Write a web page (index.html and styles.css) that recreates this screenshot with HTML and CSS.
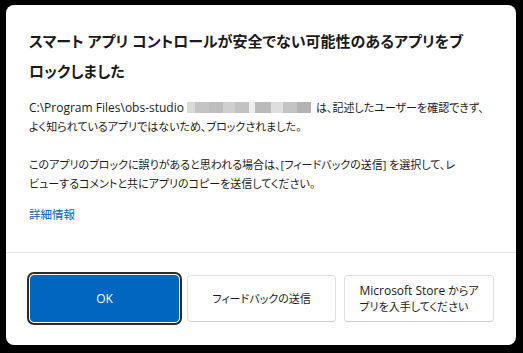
FILE: index.html
```html
<!DOCTYPE html>
<html lang="ja">
<head>
<meta charset="utf-8">
<link rel="stylesheet" href="styles.css">
</head>
<body>
<div class="screen">
  <div class="dialog">
    <div class="content">
      <h1 class="title">スマート アプリ コントロールが安全でない可能性のあるアプリをブ<br>ロックしました</h1>
      <p class="text"><span class="latin">C:\Program Files\obs-studio</span><span class="blur"><i class="b1"></i><i class="b2"></i><i class="b3"></i><i class="b4"></i><i class="b5"></i><i class="gap"></i><i class="b6"></i><i class="b7"></i><i class="b8"></i><i class="b9"></i></span>は、記述したユーザーを確認できず、<br>よく知られているアプリではないため、ブロックされました。</p>
      <p class="text">このアプリのブロックに誤りがあると思われる場合は、[フィードバックの送信] を選択して、レ<br>ビューするコメントと共にアプリのコピーを送信してください。</p>
      <a class="link" href="#">詳細情報</a>
    </div>
    <div class="footer">
      <button class="btn primary"><span class="label latin">OK</span></button>
      <button class="btn"><span class="label">フィードバックの送信</span></button>
      <button class="btn"><span class="label"><span class="latin">Microsoft Store</span> からア<br>プリを入手してください</span></button>
    </div>
  </div>
</div>
</body>
</html>
```
FILE: styles.css
```css
html, body {
  margin: 0;
  padding: 0;
  background: #000;
}
body {
  width: 523px;
  height: 353px;
  overflow: hidden;
  font-family: "Open Sans", "Noto Sans CJK JP", sans-serif;
  font-feature-settings: "palt" 1;
  color: #1b1b1b;
}
.screen {
  padding: 5px 7px 8px 6px;
}
.dialog {
  width: 510px;
  height: 340px;
  background: #fff;
  border-radius: 8px;
  display: flex;
  flex-direction: column;
  overflow: hidden;
}
.content {
  padding: 21px 20px 0 23px;
  flex: 1;
}
.title {
  margin: 0;
  font-size: 15px;
  font-weight: 700;
  line-height: 30px;
  white-space: nowrap;
  color: #1a1a1a;
}
.text {
  margin: 12px 0 19px;
  font-size: 11px;
  line-height: 19px;
  white-space: nowrap;
}
.latin {
  font-size: 12px;
}
.text + .text {
  margin-top: 0;
  margin-bottom: 12px;
}
.blur {
  display: inline-flex;
  vertical-align: -1px;
  height: 11px;
  margin: 0 5px 0 3px;
}
.blur i {
  display: block;
  width: 10px;
  height: 11px;
  background: #c8c8c8;
}
.blur .b1 { background: #d9d9d9; width: 8px; }
.blur .b2 { background: #c4c4c4; width: 14px; }
.blur .b3 { background: #bdbdbd; width: 14px; }
.blur .b4 { background: #cfcfcf; width: 12px; }
.blur .b5 { background: #c2c2c2; width: 14px; }
.blur .gap { background: #ededed; width: 6px; }
.blur .b6 { background: #bababa; width: 16px; }
.blur .b7 { background: #dedede; width: 12px; }
.blur .b8 { background: #c4c4c4; width: 14px; }
.blur .b9 { background: #b3b3b3; width: 14px; }
.link {
  display: block;
  margin-top: 2px;
  font-size: 11.5px;
  line-height: 19px;
  color: #005fb8;
  text-decoration: none;
}
.footer {
  border-top: 1px solid #e5e5e5;
  height: 93px;
  flex: none;
  box-sizing: border-box;
  padding: 22px 22px 0 24px;
  display: grid;
  grid-template-columns: 149px 149px 150px;
  column-gap: 8px;
  align-items: start;
}
.btn {
  height: 47px;
  border: 1px solid #e0e0e0;
  border-bottom-color: #cdcdcd;
  border-radius: 4px;
  background: #fff;
  font-family: "Open Sans", "Noto Sans CJK JP", sans-serif;
  font-feature-settings: "palt" 1;
  font-size: 11px;
  line-height: 16px;
  color: #1b1b1b;
  padding: 0 6px;
  text-align: center;
}
.label {
  display: inline-block;
  text-align: left;
}
.primary {
  background: #0067c0;
  border-color: #0067c0;
  color: #fff;
  outline: 2px solid #2b2b2b;
  outline-offset: 1px;
  border-radius: 4px;
}
```
